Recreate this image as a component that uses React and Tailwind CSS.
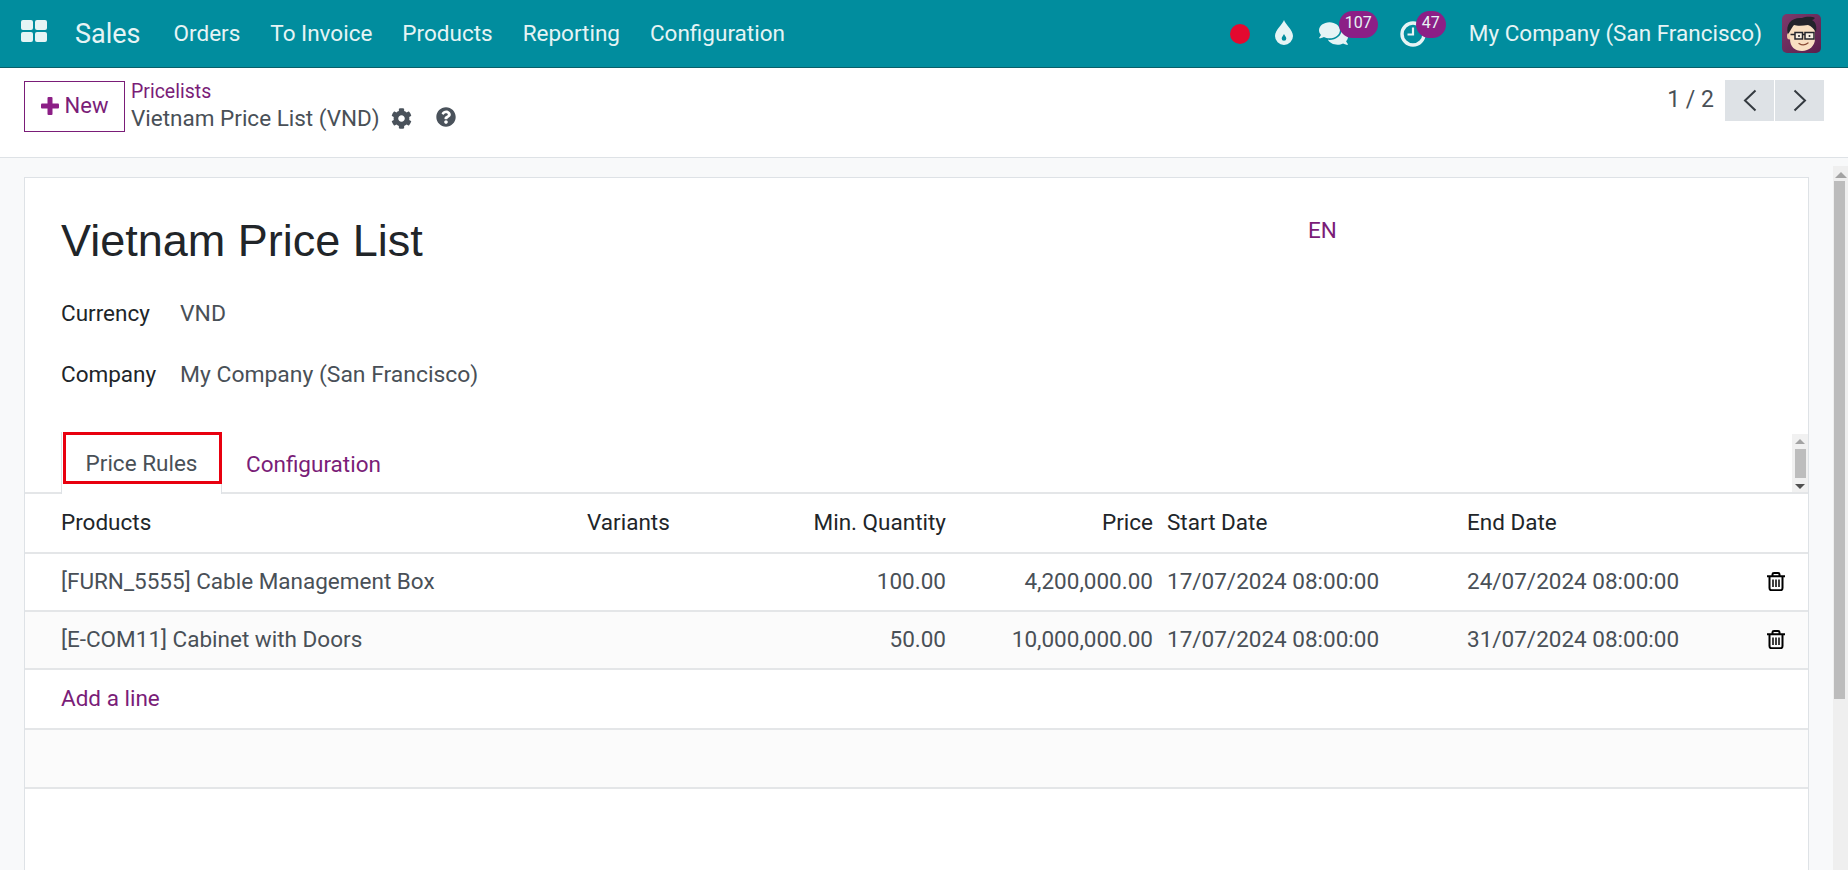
import React from 'react';
import { FaCog, FaQuestionCircle, FaComments } from 'react-icons/fa';

const menu = ['Orders', 'To Invoice', 'Products', 'Reporting', 'Configuration'];

const rows = [
  { name: '[FURN_5555] Cable Management Box', qty: '100.00', price: '4,200,000.00', start: '17/07/2024 08:00:00', end: '24/07/2024 08:00:00' },
  { name: '[E-COM11] Cabinet with Doors', qty: '50.00', price: '10,000,000.00', start: '17/07/2024 08:00:00', end: '31/07/2024 08:00:00' },
];

const Avatar = () => (
  <svg viewBox="0 0 39 39" className="w-[39px] h-[39px] rounded-[5px] shrink-0">
    <defs>
      <linearGradient id="av" x1="0" y1="0" x2="1" y2="1">
        <stop offset="0" stopColor="#7d3a6c" />
        <stop offset="1" stopColor="#5a1f4c" />
      </linearGradient>
    </defs>
    <rect width="39" height="39" fill="url(#av)" />
    <ellipse cx="7.500" cy="22" rx="2.500" ry="3.500" fill="#eec9a6" />
    <path d="M7 16c0-4 5-7 13-7s13 4 13 10v6c0 7-6 12-13 12S8 33 8 25z" fill="#f8dfc2" />
    <path d="M6 20C3 10 10 3 20 4c3-1 9-2 13 0-1 1-2 2-3 2 4 2 5 7 4 12-2-3-5-6-8-7-6 1-11 1-14 0-2 2-3 5-6 9z" fill="#23232b" />
    <rect x="13" y="18.500" width="7.500" height="6.500" fill="#f8efe2" stroke="#26262c" strokeWidth="1.500" />
    <rect x="23" y="18.500" width="9" height="6.500" fill="#f8efe2" stroke="#26262c" strokeWidth="1.500" />
    <path d="M20.500 20.500h2.500M13 20.500H8.500" stroke="#26262c" strokeWidth="1.300" />
    <circle cx="17" cy="22" r="1" fill="#26262c" />
    <circle cx="27.500" cy="22" r="1" fill="#26262c" />
    <path d="M17 29.500c3 2 6.500 1.500 9-.5" fill="none" stroke="#8a4b36" strokeWidth="1.300" strokeLinecap="round" />
  </svg>
);

const DropIcon = () => (
  <svg viewBox="0 0 18 25" className="w-[18px] h-[25px]">
    <path d="M9 0c1 4 9 10 9 16a9 9 0 0 1-18 0C0 10 8 4 9 0z" fill="#e6f4f5" />
    <path d="M9 14c.5 1.500 2.300 2.800 2.300 4.400a2.300 2.300 0 0 1-4.600 0C6.700 16.800 8.500 15.500 9 14z" fill="#018d9e" />
  </svg>
);

const ClockIcon = () => (
  <svg viewBox="0 0 26 26" className="w-[26px] h-[26px]" fill="none" stroke="#e6f4f5" strokeWidth="3.400">
    <circle cx="13" cy="13" r="11" />
    <path d="M13 6.500v7H7.500" strokeWidth="2.200" />
  </svg>
);

const Chevron = ({ left }) => (
  <svg viewBox="0 0 14 23" className="w-[14px] h-[23px]" fill="none" stroke="#343a40" strokeWidth="2">
    <path d={left ? 'M12.500 1.500 2 11.500l10.500 10' : 'M1.500 1.500 12 11.500l-10.500 10'} />
  </svg>
);

const TrashIcon = () => (
  <svg viewBox="0 0 18 19" className="w-[18px] h-[19px]" fill="none" stroke="#000" strokeWidth="2">
    <path d="M0 4.300h18M5.500 4V2.200Q5.500 1 7 1h4q1.500 0 1.500 1.200V4" />
    <path d="M2.500 4.300V16q0 2.200 2 2.200h9q2 0 2-2.200V4.300" />
    <path d="M6 7.500v7.500M9 7.500v7.500M12 7.500v7.500" strokeWidth="1.500" />
  </svg>
);

export default function App() {
  return (
    <div className="h-[870px] overflow-hidden flex flex-col bg-white font-['Roboto',sans-serif] text-[22.5px] leading-[30px] text-[#495057]">
      <header className="h-[68px] shrink-0 bg-[#018d9e] border-b border-[#0a5f69] flex items-center text-[#e6f4f5]">
        <div className="w-[75px] pl-[21px] shrink-0">
          <div className="grid grid-cols-2 gap-[2px] w-[26px] h-[22px] mb-[5px]">
            <span className="rounded-[2px] bg-[#e6f4f5]" />
            <span className="rounded-[2px] bg-[#e6f4f5]" />
            <span className="rounded-[2px] bg-[#e6f4f5]" />
            <span className="rounded-[2px] bg-[#e6f4f5]" />
          </div>
        </div>
        <div className="text-[27px] mr-[33px]">Sales</div>
        <nav className="flex gap-[30px] -mt-[1px]">
          {menu.map((m) => (
            <span key={m}>{m}</span>
          ))}
        </nav>
        <div className="ml-auto flex items-center pr-[27px]">
          <span className="w-5 h-5 rounded-full bg-[#e4092f] mr-[25px]" />
          <span className="mr-[26px] -mt-[3px] flex"><DropIcon /></span>
          <div className="relative mr-[52px] flex">
            <FaComments className="text-[29px]" />
            <span className="absolute -top-[8px] left-[20px] w-[39px] h-[27px] rounded-full bg-[#8c1f86] text-[16px] leading-[23px] text-center">107</span>
          </div>
          <div className="relative mr-[43px] flex">
            <ClockIcon />
            <span className="absolute -top-[10px] left-[16px] w-[30px] h-[27px] rounded-full bg-[#8c1f86] text-[16px] leading-[23px] text-center">47</span>
          </div>
          <span className="mr-[20px] -mt-[1px]">My Company (San Francisco)</span>
          <Avatar />
        </div>
      </header>

      <div className="h-[90px] shrink-0 border-b border-[#dee2e6] flex items-start px-[24px]">
        <button className="mt-[13px] w-[101px] h-[51px] pb-[2px] border border-[#7a1d78] text-[#7a1d78] flex items-center justify-center gap-[6px] text-[22px]">
          <svg viewBox="0 0 18 18" className="w-[18px] h-[18px]" fill="#8c1f86">
            <rect x="6.500" width="5" height="18" rx="1" />
            <rect y="6.500" width="18" height="5" rx="1" />
          </svg>
          New
        </button>
        <div className="ml-[6px] mt-[12px]">
          <div className="text-[#7a1d78] text-[19.5px] leading-[24px]">Pricelists</div>
          <div className="flex items-center -mt-[1px]">
            Vietnam Price List (VND)
            <FaCog className="ml-[11px] text-[21px] text-[#4a525b]" />
            <FaQuestionCircle className="ml-[24px] -mt-[2px] text-[20px] text-[#4a525b]" />
          </div>
        </div>
        <div className="ml-auto flex items-start mt-[12px]">
          <span className="text-[23px] mr-[11px] mt-[5px]">1 / 2</span>
          <div className="flex gap-[1px] h-[41px]">
            <span className="w-[49px] bg-[#dee2e6] flex items-center justify-center"><Chevron left /></span>
            <span className="w-[49px] bg-[#dee2e6] flex items-center justify-center"><Chevron /></span>
          </div>
        </div>
      </div>

      <div className="flex-1 min-h-0 flex bg-[#f8f9fa]">
        <div className="w-[1833px] shrink-0 pt-[19px] pl-[24px] pr-[24px]">
          <div className="h-[800px] bg-white border border-[#dee2e6] relative">
            <div className="flex pl-[36px] pt-[36px]">
              <h1 className="text-[45px] leading-[54px] font-['Liberation_Sans',sans-serif] text-[#212529]">Vietnam Price List</h1>
              <span className="absolute left-[1283px] top-[37px] text-[#7a1d78]">EN</span>
            </div>
            <div className="pl-[36px] mt-[29px] flex flex-col gap-[30px]">
              <div className="flex items-center h-[31px]">
                <span className="w-[119px] text-[#212529]">Currency</span>
                <span className="text-[22.9px] pt-[2px]">VND</span>
              </div>
              <div className="flex items-center h-[31px]">
                <span className="w-[119px] text-[#212529]">Company</span>
                <span className="text-[22.9px] pt-[2px]">My Company (San Francisco)</span>
              </div>
            </div>

            <div className="relative h-[76px] mt-[29px] border-b-2 border-[#e4e6e8] pl-[36px] flex items-end">
              <div className="relative -mb-[2px] w-[161px] h-[62px] bg-white border-x border-[#dee2e6] flex items-start justify-center">
                <span className="absolute left-[1px] -right-[1px] top-0 h-[52px] border-[3px] border-[#e8000f]" />
                <span className="mt-[16px]">Price Rules</span>
              </div>
              <span className="text-[#7a1d78] ml-[24px] pb-[13px]">Configuration</span>
              <div className="absolute right-0 bottom-0 w-[16px] h-[58px] bg-[#f1f1f1] flex flex-col items-center">
                <span className="mt-[5px] border-x-[5px] border-x-transparent border-b-[5px] border-b-[#a3a3a3]" />
                <span className="mt-[5px] w-[11px] h-[29px] bg-[#bdbdbd]" />
                <span className="mt-[6px] border-x-[5px] border-x-transparent border-t-[5px] border-t-[#505050]" />
              </div>
            </div>

            <table className="w-full table-fixed border-collapse text-left [&_td]:pb-[2px] [&_th]:pb-[2px]">
              <thead>
                <tr className="h-[59px] border-b-2 border-[#e4e6e8] text-[#212529]">
                  <th className="font-normal pl-[36px] w-[562px]">Products</th>
                  <th className="font-normal w-[140px]">Variants</th>
                  <th className="font-normal text-right w-[219px]">Min. Quantity</th>
                  <th className="font-normal text-right w-[207px]">Price</th>
                  <th className="font-normal pl-[14px] w-[314px]">Start Date</th>
                  <th className="font-normal">End Date</th>
                  <th className="w-[60px]"></th>
                </tr>
              </thead>
              <tbody>
                {rows.map((r, i) => (
                  <tr key={r.name} className={`h-[58px] border-b-2 border-[#e4e6e8] ${i === 1 ? 'bg-[#fbfbfb]' : ''}`}>
                    <td className="pl-[36px] whitespace-nowrap">{r.name}</td>
                    <td></td>
                    <td className="text-right">{r.qty}</td>
                    <td className="text-right">{r.price}</td>
                    <td className="pl-[14px]">{r.start}</td>
                    <td>{r.end}</td>
                    <td className="pl-[19px]"><TrashIcon /></td>
                  </tr>
                ))}
                <tr className="h-[60px] border-b-2 border-[#e4e6e8]">
                  <td colSpan={7} className="pl-[36px] text-[#7a1d78]">Add a line</td>
                </tr>
                <tr className="h-[59px] border-b-2 border-[#e4e6e8] bg-[#fbfbfb]">
                  <td colSpan={7}></td>
                </tr>
              </tbody>
            </table>
          </div>
        </div>
        <div className="flex-1 pt-[8px] bg-[#f8f9fa]">
          <div className="h-full bg-[#efefef] flex flex-col items-center">
            <span className="mt-[6px] border-x-[6px] border-x-transparent border-b-[6px] border-b-[#a3a3a3]" />
            <span className="mt-[3px] w-[11px] ml-[-2px] h-[518px] bg-[#bcbcbc]" />
          </div>
        </div>
      </div>
    </div>
  );
}
